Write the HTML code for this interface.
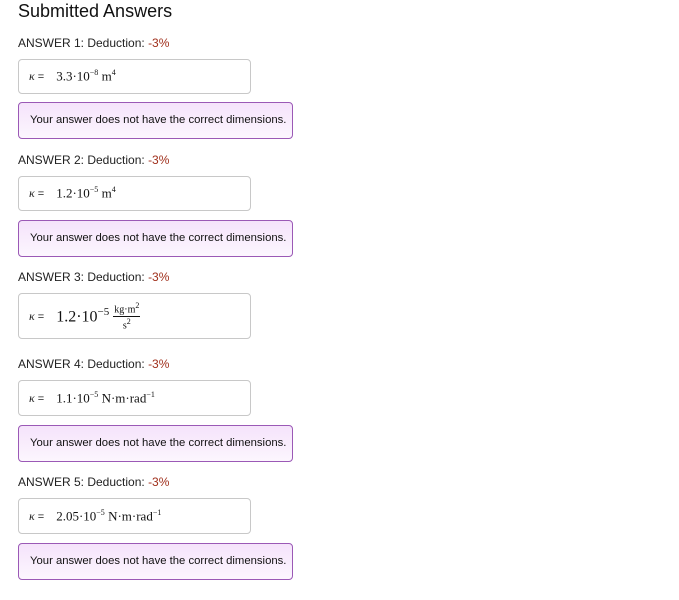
<!DOCTYPE html>
<html><head><meta charset="utf-8"><style>
body{margin:0;width:679px;height:600px;background:#fff;font-family:"Liberation Sans",Arial,sans-serif;color:#222;position:relative;overflow:hidden}
.t{position:absolute;left:18px;top:1px;font-size:18px;color:#111}
.l{position:absolute;left:18px;font-size:12px;color:#222}
.l span{color:#a0301c}
.b{position:absolute;left:18px;width:233px;border:1px solid #c8c8c8;border-radius:4px;background:#fff;box-sizing:border-box;display:flex;align-items:center;padding-left:10px}
.k{font-family:"Liberation Serif",serif;font-style:italic;font-size:12px;margin-right:12px}
.k i{font-style:normal;font-family:"Liberation Sans",sans-serif;font-size:11px}
.m{font-family:"Liberation Serif",serif;font-size:13px;color:#111}
.m sup{font-size:8px}
.f{position:absolute;left:18px;width:275px;height:37px;border:1px solid #9b59b6;border-radius:4px;background:linear-gradient(#f5e3fb,#fcf6fe);box-sizing:border-box;font-size:11.3px;color:#111;padding-left:11px;line-height:35px;white-space:nowrap}
.fr{display:inline-flex;flex-direction:column;align-items:center;vertical-align:middle;font-size:10px;margin-left:4px}
.fr span:first-child{border-bottom:1px solid #111;padding:0 1px}
</style></head><body>
<div class="t">Submitted Answers</div>

<div class="l" style="top:36px">ANSWER 1: Deduction: <span>-3%</span></div>
<div class="b" style="top:59px;height:35px"><span class="k">κ <i>=</i></span><span class="m">3.3·10<sup>−8</sup> m<sup>4</sup></span></div>
<div class="f" style="top:102px">Your answer does not have the correct dimensions.</div>

<div class="l" style="top:153px">ANSWER 2: Deduction: <span>-3%</span></div>
<div class="b" style="top:176px;height:35px"><span class="k">κ <i>=</i></span><span class="m">1.2·10<sup>−5</sup> m<sup>4</sup></span></div>
<div class="f" style="top:220px">Your answer does not have the correct dimensions.</div>

<div class="l" style="top:270px">ANSWER 3: Deduction: <span>-3%</span></div>
<div class="b" style="top:293px;height:46px"><span class="k">κ <i>=</i></span><span class="m" style="font-size:16px">1.2·10<sup style="font-size:11px">−5</sup></span><span class="fr m"><span>kg·m<sup>2</sup></span><span>s<sup>2</sup></span></span></div>

<div class="l" style="top:357px">ANSWER 4: Deduction: <span>-3%</span></div>
<div class="b" style="top:380px;height:36px"><span class="k">κ <i>=</i></span><span class="m">1.1·10<sup>−5</sup> N·m·rad<sup>−1</sup></span></div>
<div class="f" style="top:425px">Your answer does not have the correct dimensions.</div>

<div class="l" style="top:475px">ANSWER 5: Deduction: <span>-3%</span></div>
<div class="b" style="top:498px;height:36px"><span class="k">κ <i>=</i></span><span class="m">2.05·10<sup>−5</sup> N·m·rad<sup>−1</sup></span></div>
<div class="f" style="top:543px">Your answer does not have the correct dimensions.</div>
</body></html>
